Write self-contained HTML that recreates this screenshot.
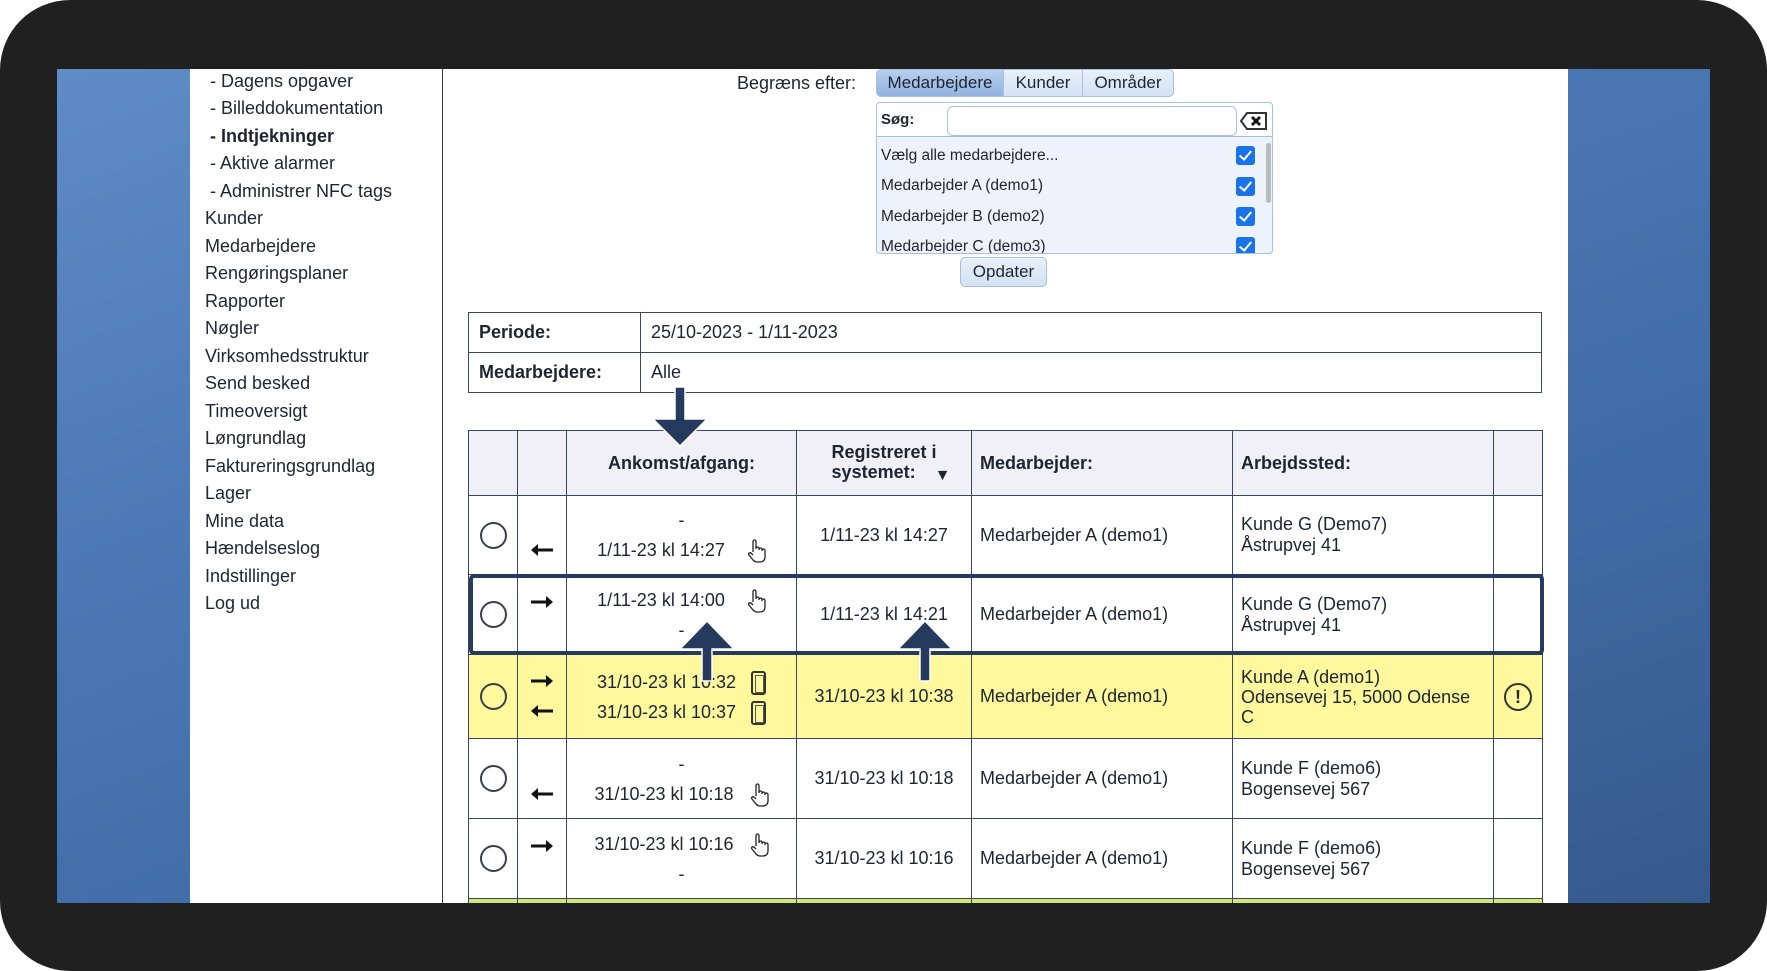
<!DOCTYPE html>
<html><head><meta charset="utf-8"><style>
*{margin:0;padding:0;box-sizing:border-box}
body{width:1767px;height:971px;background:#fff;position:relative;overflow:hidden;font-family:"Liberation Sans",sans-serif;color:#1e2430}
.bezel{position:absolute;left:0;top:0;width:1767px;height:971px;background:#212021;border-radius:70px}
.screen{position:absolute;left:57px;top:69px;width:1653px;height:834px;background:linear-gradient(160deg,#5f8cc4 0%,#4c79b5 35%,#3f6aa3 70%,#35598d 100%);overflow:hidden}
.side{position:absolute;left:133px;top:0;width:253px;height:834px;background:#fff;border-right:1px solid #3a3a4a}
.side div{position:absolute;font-size:18px;white-space:nowrap}
.a{position:absolute;white-space:nowrap}
.tab{position:absolute;top:0;height:28px;font-size:17px;text-align:center;line-height:26px;border:1px solid #a7c0e0;background:linear-gradient(#e8f0fa,#d4e2f3)}
table{border-collapse:collapse;position:absolute}
td{border:1px solid #38465e;font-size:18px}
.cb{position:absolute;width:19px;height:19px;background:#1a73e8;border-radius:3px}
.cb:after{content:"";position:absolute;left:6px;top:2px;width:5px;height:10px;border:solid #fff;border-width:0 2.5px 2.5px 0;transform:rotate(40deg)}
.circ{width:27px;height:27px;border:2px solid #3a3f4a;border-radius:50%;margin:auto}
.c{text-align:center}
.h{display:inline-block;vertical-align:middle;margin-left:16px}
.ph{display:inline-block;width:15px;height:24px;border:2px solid #333;border-radius:3px;margin-left:10px;vertical-align:middle;position:relative}
.ph:after{content:"";position:absolute;left:2px;top:2px;width:7px;height:16px;border:1px solid #555}
</style></head><body>
<svg width="0" height="0" style="position:absolute">
 <defs>
  <symbol id="r" viewBox="0 0 24 14"><path d="M1 5.5h15V1l7 6-7 6V8.5H1z" fill="#111"/></symbol>
  <symbol id="l" viewBox="0 0 24 14"><path d="M23 5.5H8V1L1 7l7 6V8.5h15z" fill="#111"/></symbol>
  <symbol id="hd" viewBox="0 0 20 26"><path d="M7 14V3.5a1.5 1.5 0 0 1 3 0V11M10 10.5a1.5 1.5 0 0 1 3 0V12M13 11.5a1.5 1.5 0 0 1 3 0V13M16 12.5a1.5 1.5 0 0 1 3 0V19c0 3-2 5-5 5h-3c-2 0-3-1-4-2l-4-5c-1-1 0-3 2-2l2 2" fill="#fff" stroke="#222" stroke-width="1.3"/></symbol>
 </defs>
</svg>
<div class="bezel"></div>
<div class="screen">
 <div class="side">
  <div style="left:20px;top:2px">- Dagens opgaver</div>
  <div style="left:20px;top:29px">- Billeddokumentation</div>
  <div style="left:20px;top:57px;font-weight:bold">- Indtjekninger</div>
  <div style="left:20px;top:84px">- Aktive alarmer</div>
  <div style="left:20px;top:112px">- Administrer NFC tags</div>
  <div style="left:15px;top:139px">Kunder</div>
  <div style="left:15px;top:167px">Medarbejdere</div>
  <div style="left:15px;top:194px">Rengøringsplaner</div>
  <div style="left:15px;top:222px">Rapporter</div>
  <div style="left:15px;top:249px">Nøgler</div>
  <div style="left:15px;top:277px">Virksomhedsstruktur</div>
  <div style="left:15px;top:304px">Send besked</div>
  <div style="left:15px;top:332px">Timeoversigt</div>
  <div style="left:15px;top:359px">Løngrundlag</div>
  <div style="left:15px;top:387px">Faktureringsgrundlag</div>
  <div style="left:15px;top:414px">Lager</div>
  <div style="left:15px;top:442px">Mine data</div>
  <div style="left:15px;top:469px">Hændelseslog</div>
  <div style="left:15px;top:497px">Indstillinger</div>
  <div style="left:15px;top:524px">Log ud</div>
 </div>
</div>
<div style="position:absolute;left:443px;top:69px;width:1125px;height:834px;background:#fff;overflow:hidden">
 <div class="a" style="left:294px;top:4px;font-size:18px">Begræns efter:</div>
 <div class="tab" style="left:433px;width:128px;background:linear-gradient(#b8cfee,#92b3e0);border-radius:5px 0 0 5px">Medarbejdere</div>
 <div class="tab" style="left:560px;width:80px">Kunder</div>
 <div class="tab" style="left:639px;width:92px;border-radius:0 5px 5px 0">Områder</div>
 <div style="position:absolute;left:433px;top:33px;width:397px;height:152px;border:1px solid #a7c0e0;border-radius:4px;background:#edf3fd;overflow:hidden">
  <div style="position:absolute;left:0;top:0;width:100%;height:34px;background:#fff;border-bottom:1px solid #a7c0e0"></div>
  <div class="a" style="left:4px;top:8px;font-size:15px;font-weight:bold">Søg:</div>
  <div style="position:absolute;left:70px;top:3px;width:290px;height:30px;border:1px solid #a7c0e0;border-radius:6px;background:#fff"></div>
  <svg style="position:absolute;left:362px;top:8px" width="30" height="20" viewBox="0 0 30 20"><path d="M8 2H27V18H8L2 10Z" fill="#fff" stroke="#333" stroke-width="2"/><path d="M13 6l8 8M21 6l-8 8" stroke="#111" stroke-width="3"/></svg>
  <div style="position:absolute;left:389px;top:40px;width:5px;height:60px;background:#bbb;border-radius:3px"></div>
  <div class="a" style="left:4px;top:44px;font-size:15.5px">Vælg alle medarbejdere...</div>
  <div class="a" style="left:4px;top:74px;font-size:15.5px">Medarbejder A (demo1)</div>
  <div class="a" style="left:4px;top:105px;font-size:15.5px">Medarbejder B (demo2)</div>
  <div class="a" style="left:4px;top:135px;font-size:15.5px">Medarbejder C (demo3)</div>
  <div class="cb" style="left:359px;top:43px"></div>
  <div class="cb" style="left:359px;top:74px"></div>
  <div class="cb" style="left:359px;top:104px"></div>
  <div class="cb" style="left:359px;top:134px"></div>
 </div>
 <div class="tab" style="left:517px;top:188px;width:87px;height:30px;line-height:28px;border-radius:5px">Opdater</div>

 <table style="left:25px;top:243px;width:1074px">
  <tr style="height:40px"><td style="width:172px;padding-left:10px;font-weight:bold">Periode:</td><td style="padding-left:10px">25/10-2023 - 1/11-2023</td></tr>
  <tr style="height:40px"><td style="padding-left:10px;font-weight:bold">Medarbejdere:</td><td style="padding-left:10px">Alle</td></tr>
 </table>

 <table style="left:25px;top:361px;width:1075px">
  <tr style="height:65px;background:#f0f0f6;font-weight:bold"><td style="width:49px"></td><td style="width:49px"></td><td class="c" style="width:230px">Ankomst/afgang:</td><td class="c" style="width:175px;line-height:20px">Registreret i<br>systemet: <span style="font-size:16px;position:relative;left:14px;top:2px">▼</span></td><td style="width:261px;padding-left:8px">Medarbejder:</td><td style="width:261px;padding-left:8px">Arbejdssted:</td><td></td></tr>
  <tr style="height:79px"><td><div class="circ"></div></td><td class="c" style="vertical-align:bottom;padding-bottom:12px"><svg width="24" height="14"><use href="#l"/></svg></td><td class="c" style="line-height:30px">-<br>1/11-23 kl 14:27 <svg class="h" width="20" height="26"><use href="#hd"/></svg></td><td class="c">1/11-23 kl 14:27</td><td style="padding-left:8px">Medarbejder A (demo1)</td><td style="padding-left:8px;line-height:21px">Kunde G (Demo7)<br>Åstrupvej 41</td><td></td></tr>
  <tr style="height:80px"><td><div class="circ"></div></td><td class="c" style="vertical-align:top;padding-top:18px"><svg width="24" height="14"><use href="#r"/></svg></td><td class="c" style="line-height:30px">1/11-23 kl 14:00 <svg class="h" width="20" height="26"><use href="#hd"/></svg><br>-</td><td class="c">1/11-23 kl 14:21</td><td style="padding-left:8px">Medarbejder A (demo1)</td><td style="padding-left:8px;line-height:21px">Kunde G (Demo7)<br>Åstrupvej 41</td><td></td></tr>
  <tr style="height:84px;background:#fdf99c"><td><div class="circ"></div></td><td class="c" style="line-height:30px"><svg width="24" height="14"><use href="#r"/></svg><br><svg width="24" height="14"><use href="#l"/></svg></td><td class="c" style="line-height:30px">31/10-23 kl 10:32 <span class="ph"></span><br>31/10-23 kl 10:37 <span class="ph"></span></td><td class="c">31/10-23 kl 10:38</td><td style="padding-left:8px">Medarbejder A (demo1)</td><td style="padding-left:8px;line-height:20px">Kunde A (demo1)<br>Odensevej 15, 5000 Odense<br>C</td><td class="c"><div style="width:28px;height:28px;border:2px solid #333;border-radius:50%;margin:auto;font-weight:bold;line-height:24px;font-size:18px">!</div></td></tr>
  <tr style="height:80px"><td><div class="circ"></div></td><td class="c" style="vertical-align:bottom;padding-bottom:12px"><svg width="24" height="14"><use href="#l"/></svg></td><td class="c" style="line-height:30px">-<br>31/10-23 kl 10:18 <svg class="h" style="margin-left:10px" width="20" height="26"><use href="#hd"/></svg></td><td class="c">31/10-23 kl 10:18</td><td style="padding-left:8px">Medarbejder A (demo1)</td><td style="padding-left:8px;line-height:21px">Kunde F (demo6)<br>Bogensevej 567</td><td></td></tr>
  <tr style="height:80px"><td><div class="circ"></div></td><td class="c" style="vertical-align:top;padding-top:18px"><svg width="24" height="14"><use href="#r"/></svg></td><td class="c" style="line-height:30px">31/10-23 kl 10:16 <svg class="h" style="margin-left:10px" width="20" height="26"><use href="#hd"/></svg><br>-</td><td class="c">31/10-23 kl 10:16</td><td style="padding-left:8px">Medarbejder A (demo1)</td><td style="padding-left:8px;line-height:21px">Kunde F (demo6)<br>Bogensevej 567</td><td></td></tr>
  <tr style="height:20px;background:#cfe877"><td></td><td></td><td></td><td></td><td></td><td></td><td></td></tr>
 </table>
 <div style="position:absolute;left:26px;top:505px;width:1075px;height:81px;border:4px solid #253a5c;border-radius:5px"></div>
 <svg style="position:absolute;left:0;top:0" width="1125" height="834">
  <g fill="#253a5c" stroke="#fff" stroke-width="1.5">
   <path d="M232 318h10v32h22l-27 27l-27-27h22z"/>
   <path d="M259 612h10v-32h22l-27-28l-27 28h22z"/>
   <path d="M477 612h10v-32h22l-27-28l-27 28h22z"/>
  </g>
 </svg>
</div>
</body></html>
